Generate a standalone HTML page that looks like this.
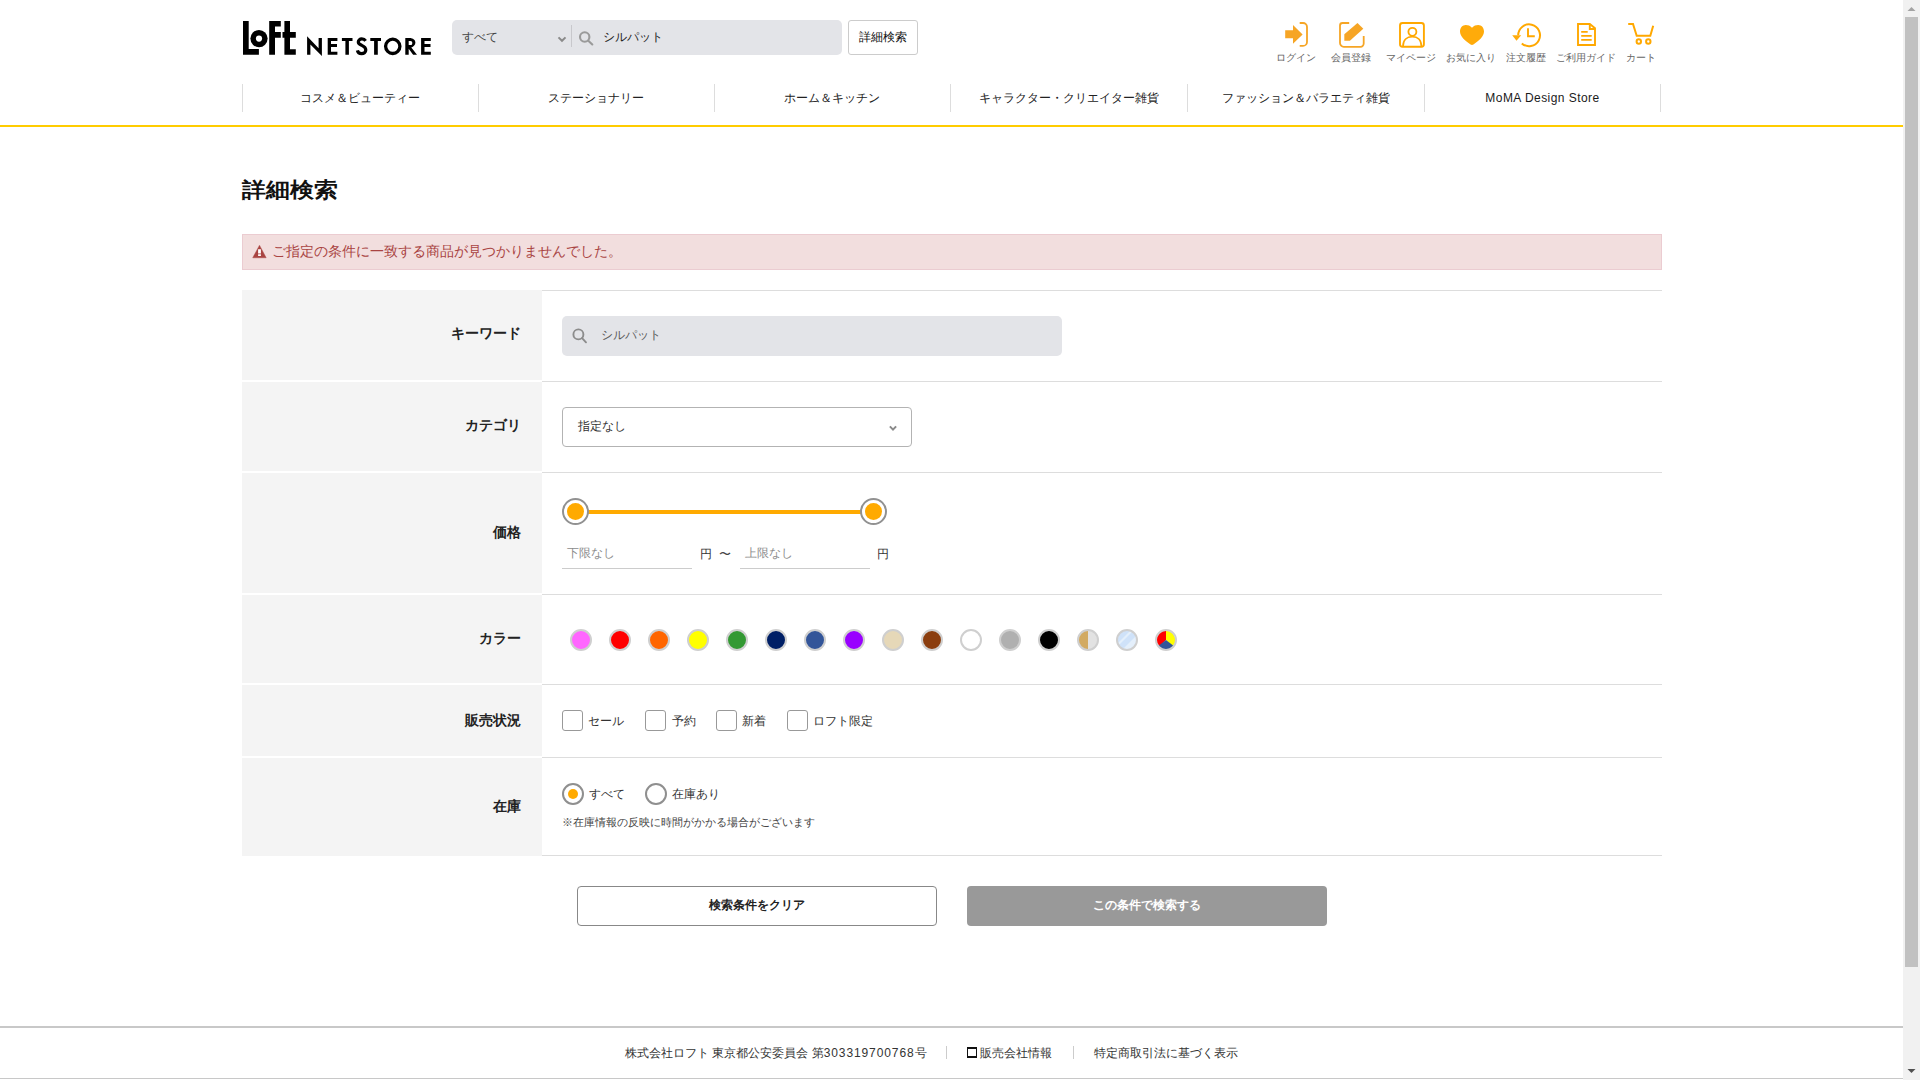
<!DOCTYPE html>
<html lang="ja"><head><meta charset="utf-8"><title>詳細検索</title>
<style>
*{box-sizing:border-box;margin:0;padding:0}
html,body{width:1920px;height:1080px;overflow:hidden;background:#fff}
body{font-family:"Liberation Sans",sans-serif;color:#222;position:relative}
.a{position:absolute;white-space:nowrap}
.ic{position:absolute}
.lbl{position:absolute;font-size:10px;color:#666;text-align:center;width:70px;top:51.5px;line-height:12px}
.nav{position:absolute;top:84px;height:28px;border-left:1px solid #ddd}
.navt{position:absolute;top:90px;font-size:12px;color:#222;text-align:center;line-height:16px}
.th{position:absolute;left:242px;width:300px;background:#f4f4f4}
.tl{position:absolute;left:542px;width:1120px;height:1px;background:#ddd}
.lab{position:absolute;right:1399px;font-size:14px;font-weight:bold;color:#222;line-height:16px;text-align:right}
.sw{position:absolute;top:629px;width:22px;height:22px;border-radius:50%;border:2px solid #cfcfcf}
.cb{position:absolute;top:710px;width:21px;height:21px;border:1px solid #999;border-radius:3px;background:#fff}
.cbt{position:absolute;top:713px;font-size:12px;color:#333;line-height:16px}
#sb{position:absolute;left:1903px;top:0;width:17px;height:1080px;background:#f1f1f1}
</style></head><body>
<!-- HEADER -->
<svg class="ic" style="left:0;top:0" width="450" height="70" viewBox="0 0 450 70">
<g fill="#000">
<path d="M243,21.1H248.7V49H258.9V54.7H243Z"/>
<circle cx="259" cy="38.6" r="8.6"/>
<path d="M269.2,21H280.8V26.5H275V32H280.8V37.7H275V54.7H269.2Z"/>
<path d="M284.4,21H290V32H295.8V37.7H290V49.2H295.8V54.7H284.4V37.7H282.5V32H284.4Z"/>
<path d="M307.1,36.2L318.6,48.2V38H321.9V55.9L310.4,44.6V54.8H307.1Z"/>
<path d="M327.7,38H337.4V40.9H331V44H337V47H331V51.7H337.4V54.8H327.7Z"/>
<path d="M341.9,38H352.5V40.9H348.9V54.8H345.4V40.9H341.9Z"/>
<path d="M370.3,38H381V40.9H377.8V54.8H374.1V40.9H370.3Z"/>
<path d="M405.3,38H409.5C413.2,38 415.4,40.2 415.4,42.6C415.4,45 413.6,46.8 411.3,47.4L417,54.8H413.1L408.7,48.8V54.8H405.3ZM408.7,40.9V45H410.6C411.9,45 412.3,44 412.3,42.9C412.3,41.8 411.7,40.9 410.4,40.9Z"/>
<path d="M421.1,38H430.8V40.9H424.5V44H430.5V47H424.5V51.7H430.8V54.8H421.1Z"/>
</g>
<circle cx="259" cy="38.6" r="3.1" fill="#fff"/>
<circle cx="392.75" cy="46.35" r="7.15" fill="none" stroke="#000" stroke-width="3.3"/>
<path d="M365.6,40.8C364.6,39.2 363.2,38.9 361.8,38.9C359.7,38.9 358.3,40.3 358.3,42C358.3,43.9 360,44.6 361.8,45.4C363.9,46.3 365.8,47.3 365.8,50C365.8,52.3 363.9,53.6 361.6,53.6C359.5,53.6 357.9,52.5 357.4,50.3" fill="none" stroke="#000" stroke-width="3.2"/>
</svg>

<div class="a" style="left:452px;top:20px;width:390px;height:35px;background:#e3e4e8;border-radius:5px"></div>
<div class="a" style="left:462px;top:29px;font-size:12px;color:#444;line-height:16px">すべて</div>
<div class="a" style="left:571px;top:25px;width:1px;height:22px;background:#c8c8cc"></div>
<div class="a" style="left:603px;top:29px;font-size:12px;color:#222;line-height:16px">シルパット</div>
<svg class="ic" style="left:550px;top:20px" width="60" height="35" viewBox="550 20 60 35">
<path d="M558.5,37.4L562,40.8L565.5,37.4" fill="none" stroke="#8a8a8a" stroke-width="2"/>
<circle cx="584.7" cy="37" r="4.7" fill="none" stroke="#9a9a9a" stroke-width="2.1"/>
<path d="M588.3,40.7L592.3,44.5" stroke="#9a9a9a" stroke-width="2.1" stroke-linecap="round"/>
</svg>
<div class="a" style="left:848px;top:20px;width:70px;height:35px;border:1px solid #ccc;border-radius:3px;background:#fff"></div>
<div class="a" style="left:859px;top:29px;font-size:12px;color:#111;line-height:16px">詳細検索</div>

<svg class="ic" style="left:1270px;top:15px" width="400" height="40" viewBox="1270 15 400 40">
<g fill="#f6a525">
<path d="M1285.2,30.3H1293V25L1302.6,34.4L1293,43.8V38.3H1285.2Z"/>
<path d="M1344.3,34.3L1357.5,23L1363.3,28.7L1349.9,40.7H1344.3Z"/>
</g>
<g fill="none" stroke="#f6a525" stroke-width="1.8">
<path d="M1299.7,23H1303A4,4 0 0 1 1307,27V41.9A4,4 0 0 1 1303,45.9H1299.7"/>
<path d="M1349.2,23H1342.5A2.5,2.5 0 0 0 1340,25.5V43A3.8,3.8 0 0 0 1343.8,46.8H1360.5A3.2,3.2 0 0 0 1363.7,43.6V36.1"/>
</g>
<g fill="none" stroke="#ffa800" stroke-width="1.9">
<rect x="1400" y="23" width="23.9" height="23.8" rx="2.5"/>
<circle cx="1412.4" cy="31.8" r="4" stroke-width="1.8"/>
<path d="M1403,46.3C1403,40 1407,36.6 1412.3,36.6C1417.6,36.6 1421.4,40 1421.4,46.3" stroke-width="1.7"/>
<path d="M1518.2,35.3A10.9,10.9 0 1 1 1521.8,43.4" stroke-width="2"/>
<path d="M1528,28.2V36.2H1534.8" stroke-width="1.9"/>
<path d="M1578,24H1589.8L1595,28.3V45H1578Z"/>
<path d="M1589.8,24V29H1595"/>
<path d="M1581.2,31.9H1587.7M1581.2,35.9H1591.7M1581.2,39.9H1591.7"/>
<path d="M1628.2,24H1633L1636.7,35.8H1650.3L1653.2,25.7" stroke-width="2"/>
<circle cx="1638.8" cy="41.5" r="2.2" stroke-width="2"/>
<circle cx="1648.3" cy="41.5" r="2.2" stroke-width="2"/>
</g>
<g fill="#ffab0a">
<path d="M1472,27.8C1470.2,25.7 1468,25 1465.8,25C1462.5,25 1460,27.8 1460,31.5C1460,36.5 1465,40.6 1470.6,44.6C1471.4,45.1 1472.6,45.1 1473.4,44.6C1479,40.6 1484,36.5 1484,31.5C1484,27.8 1481.5,25 1478.2,25C1476,25 1473.8,25.7 1472,27.8Z"/>
<path d="M1512.2,35.2H1521.2L1516.5,40.8Z"/>
</g>
</svg>
<!-- icon labels -->
<div class="lbl" style="left:1261px">ログイン</div>
<div class="lbl" style="left:1316px">会員登録</div>
<div class="lbl" style="left:1376px">マイページ</div>
<div class="lbl" style="left:1436px">お気に入り</div>
<div class="lbl" style="left:1491px">注文履歴</div>
<div class="lbl" style="left:1551px">ご利用ガイド</div>
<div class="lbl" style="left:1606px">カート</div>

<!-- NAV -->
<div class="nav" style="left:242px;width:237px"></div>
<div class="nav" style="left:478px;width:237px"></div>
<div class="nav" style="left:714px;width:237px"></div>
<div class="nav" style="left:950px;width:237px"></div>
<div class="nav" style="left:1187px;width:237px"></div>
<div class="nav" style="left:1424px;width:237px;border-right:1px solid #ddd"></div>
<div class="navt" style="left:242px;width:236px">コスメ＆ビューティー</div>
<div class="navt" style="left:478px;width:236px">ステーショナリー</div>
<div class="navt" style="left:714px;width:236px">ホーム＆キッチン</div>
<div class="navt" style="left:950px;width:237px">キャラクター・クリエイター雑貨</div>
<div class="navt" style="left:1187px;width:237px">ファッション＆バラエティ雑貨</div>
<div class="navt" style="left:1424px;width:237px;letter-spacing:0.45px;color:#1a1a1a">MoMA Design Store</div>
<div class="a" style="left:0;top:125px;width:1903px;height:2px;background:#ffcc00"></div>

<!-- TITLE -->
<div class="a" style="left:242px;top:176px;font-size:24px;font-weight:bold;color:#111;line-height:28px;transform:scaleY(0.88);transform-origin:50% 48%">詳細検索</div>

<!-- ALERT -->
<div class="a" style="left:242px;top:234px;width:1420px;height:36px;background:#f2dede;border:1px solid #ebccd1"></div>
<svg class="ic" style="left:250px;top:242px" width="20" height="18" viewBox="250 242 20 18">
<path d="M259.5,245.2L266.2,257.8H252.7Z" fill="#a94442" stroke="#a94442" stroke-width="0.4" stroke-linejoin="round"/>
<path d="M258.1,249.2H260.9V253.4H258.1ZM258.1,254.3H260.9V256.1H258.1Z" fill="#fff"/>
</svg>
<div class="a" style="left:272px;top:242.5px;font-size:14px;color:#a94442;line-height:16px">ご指定の条件に一致する商品が見つかりませんでした。</div>

<!-- FORM rows -->
<div class="th" style="top:290px;height:90px"></div>
<div class="th" style="top:382px;height:89px"></div>
<div class="th" style="top:473px;height:120px"></div>
<div class="th" style="top:595px;height:88px"></div>
<div class="th" style="top:685px;height:71px"></div>
<div class="th" style="top:758px;height:98px"></div>
<div class="tl" style="top:290px"></div>
<div class="tl" style="top:381px"></div>
<div class="tl" style="top:472px"></div>
<div class="tl" style="top:594px"></div>
<div class="tl" style="top:684px"></div>
<div class="tl" style="top:757px"></div>
<div class="tl" style="top:855px"></div>

<div class="lab" style="top:325px">キーワード</div>
<div class="lab" style="top:417px">カテゴリ</div>
<div class="lab" style="top:524px">価格</div>
<div class="lab" style="top:630px">カラー</div>
<div class="lab" style="top:712px">販売状況</div>
<div class="lab" style="top:798px">在庫</div>


<!-- keyword -->
<div class="a" style="left:562px;top:316px;width:500px;height:40px;background:#e3e4e8;border-radius:5px"></div>
<svg class="ic" style="left:562px;top:316px" width="40" height="40" viewBox="562 316 40 40">
<circle cx="578.4" cy="334.4" r="5" fill="none" stroke="#8c8c8c" stroke-width="1.9"/>
<path d="M582.1,338.1L586,342.3" stroke="#8c8c8c" stroke-width="1.9" stroke-linecap="round"/>
</svg>
<div class="a" style="left:601px;top:327px;font-size:12px;color:#5a5a5a;line-height:16px">シルパット</div>
<!-- category -->
<div class="a" style="left:562px;top:407px;width:350px;height:40px;border:1px solid #b3b3b3;border-radius:4px;background:#fff"></div>
<div class="a" style="left:578px;top:418px;font-size:12px;color:#333;line-height:16px">指定なし</div>
<svg class="ic" style="left:885px;top:420px" width="16" height="16" viewBox="885 420 16 16">
<path d="M889.9,426.4L893,429.6L896.1,426.4" fill="none" stroke="#8a8a8a" stroke-width="2"/>
</svg>
<!-- price slider -->
<div class="a" style="left:586px;top:510px;width:276px;height:4px;background:#ffaa00"></div>
<div class="a" style="left:562px;top:498px;width:27px;height:27px;border-radius:50%;border:2px solid #919191;background:#fff"></div>
<div class="a" style="left:567px;top:503px;width:17px;height:17px;border-radius:50%;background:#ffaa00"></div>
<div class="a" style="left:860px;top:498px;width:27px;height:27px;border-radius:50%;border:2px solid #919191;background:#fff"></div>
<div class="a" style="left:865px;top:503px;width:17px;height:17px;border-radius:50%;background:#ffaa00"></div>
<div class="a" style="left:562px;top:568px;width:130px;height:1px;background:#ccc"></div>
<div class="a" style="left:740px;top:568px;width:130px;height:1px;background:#ccc"></div>
<div class="a" style="left:567px;top:545px;font-size:12px;color:#8c8c8c;line-height:16px">下限なし</div>
<div class="a" style="left:745px;top:545px;font-size:12px;color:#8c8c8c;line-height:16px">上限なし</div>
<div class="a" style="left:700px;top:546px;font-size:12px;color:#333;line-height:16px">円</div>
<div class="a" style="left:719px;top:546px;font-size:12px;color:#444;line-height:16px">〜</div>
<div class="a" style="left:877px;top:546px;font-size:12px;color:#333;line-height:16px">円</div>
<!-- colors -->
<div class="sw" style="left:570px;background:#ff66ff"></div>
<div class="sw" style="left:609px;background:#ff0000"></div>
<div class="sw" style="left:648px;background:#ff6600"></div>
<div class="sw" style="left:687px;background:#ffff00"></div>
<div class="sw" style="left:726px;background:#339933"></div>
<div class="sw" style="left:765px;background:#001f66"></div>
<div class="sw" style="left:804px;background:#335599"></div>
<div class="sw" style="left:843px;background:#9900ff"></div>
<div class="sw" style="left:882px;background:#e6d8b8"></div>
<div class="sw" style="left:921px;background:#8b3e0f"></div>
<div class="sw" style="left:960px;background:#fff"></div>
<div class="sw" style="left:999px;background:#b0b0b0"></div>
<div class="sw" style="left:1038px;background:#000"></div>
<div class="sw" style="left:1077px;background:linear-gradient(90deg,#d2aa62 50%,#e2e2e2 50%)"></div>


<svg class="ic" style="left:1110px;top:623px" width="80" height="34" viewBox="1110 623 80 34">
<defs><clipPath id="cc1"><circle cx="1127" cy="640" r="9.5"/></clipPath><clipPath id="cc2"><circle cx="1166" cy="640" r="9.5"/></clipPath></defs>
<g clip-path="url(#cc1)">
<rect x="1115" y="628" width="24" height="24" fill="#cfe2f9"/>
<path d="M1120,652L1139,633V652Z" fill="#e4effb"/>
<path d="M1115,646L1133,628H1136L1118,646Z" fill="#e4effb"/>
<path d="M1115,649L1136,628" stroke="#d8e8fb" stroke-width="0.8"/>
</g>
<g clip-path="url(#cc2)">
<path d="M1166,640V628H1154V652Z" fill="#ff0000"/>
<path d="M1166,640V628H1178V652Z" fill="#ffff00"/>
<path d="M1166,640L1148,654H1184Z" fill="#335599"/>
</g>
<circle cx="1127" cy="640" r="10" fill="none" stroke="#cfcfcf" stroke-width="2"/>
<circle cx="1166" cy="640" r="10" fill="none" stroke="#cfcfcf" stroke-width="2"/>
</svg>
<!-- status -->
<div class="cb" style="left:562px"></div><div class="cbt" style="left:588px">セール</div>
<div class="cb" style="left:645px"></div><div class="cbt" style="left:672px">予約</div>
<div class="cb" style="left:716px"></div><div class="cbt" style="left:742px">新着</div>
<div class="cb" style="left:787px"></div><div class="cbt" style="left:813px">ロフト限定</div>
<!-- stock -->
<div class="a" style="left:562px;top:783px;width:22px;height:22px;border-radius:50%;border:2px solid #8f8f8f;background:#fff"></div>
<div class="a" style="left:568px;top:789px;width:10px;height:10px;border-radius:50%;background:#ffaa00"></div>
<div class="cbt" style="left:589px;top:786px">すべて</div>
<div class="a" style="left:645px;top:783px;width:22px;height:22px;border-radius:50%;border:2px solid #8f8f8f;background:#fff"></div>
<div class="cbt" style="left:672px;top:786px">在庫あり</div>
<div class="a" style="left:562px;top:815px;font-size:11px;color:#444;line-height:14px">※在庫情報の反映に時間がかかる場合がございます</div>
<!-- buttons -->
<div class="a" style="left:577px;top:886px;width:360px;height:40px;border:1px solid #888;border-radius:4px;background:#fff"></div>
<div class="a" style="left:577px;top:897px;width:360px;text-align:center;font-size:12px;font-weight:bold;color:#222;line-height:16px">検索条件をクリア</div>
<div class="a" style="left:967px;top:886px;width:360px;height:40px;border-radius:4px;background:#999"></div>
<div class="a" style="left:967px;top:897px;width:360px;text-align:center;font-size:12px;font-weight:bold;color:#fff;line-height:16px">この条件で検索する</div>
<!-- footer -->
<div class="a" style="left:0;top:1026px;width:1903px;height:2px;background:#c8c8c8"></div>
<div class="a" style="left:0;top:1078px;width:1903px;height:1px;background:#c8c8c8"></div>
<div class="a" style="left:625px;top:1045px;font-size:12px;color:#333;line-height:16px">株式会社ロフト 東京都公安委員会 第<span style="letter-spacing:0.9px">303319700768</span>号</div>
<div class="a" style="left:946px;top:1046px;width:1px;height:13px;background:#ccc"></div>
<div class="a" style="left:967px;top:1047px;width:10px;height:11px;border:1.5px solid #111;border-top-width:2px;border-bottom-width:2.5px"></div>
<div class="a" style="left:980px;top:1045px;font-size:12px;color:#333;line-height:16px">販売会社情報</div>
<div class="a" style="left:1073px;top:1046px;width:1px;height:13px;background:#ccc"></div>
<div class="a" style="left:1094px;top:1045px;font-size:12px;color:#333;line-height:16px">特定商取引法に基づく表示</div>
<div id="sb">
<div class="a" style="left:2px;top:17px;width:13px;height:950px;background:#c1c1c1"></div>
<svg class="ic" style="left:0;top:0" width="17" height="17"><path d="M4.5,11H12.5L8.5,7Z" fill="#a3a3a3"/></svg>
<svg class="ic" style="left:0;top:1063px" width="17" height="17"><path d="M4.5,6H12.5L8.5,10Z" fill="#505050"/></svg>
</div>
</body></html>
